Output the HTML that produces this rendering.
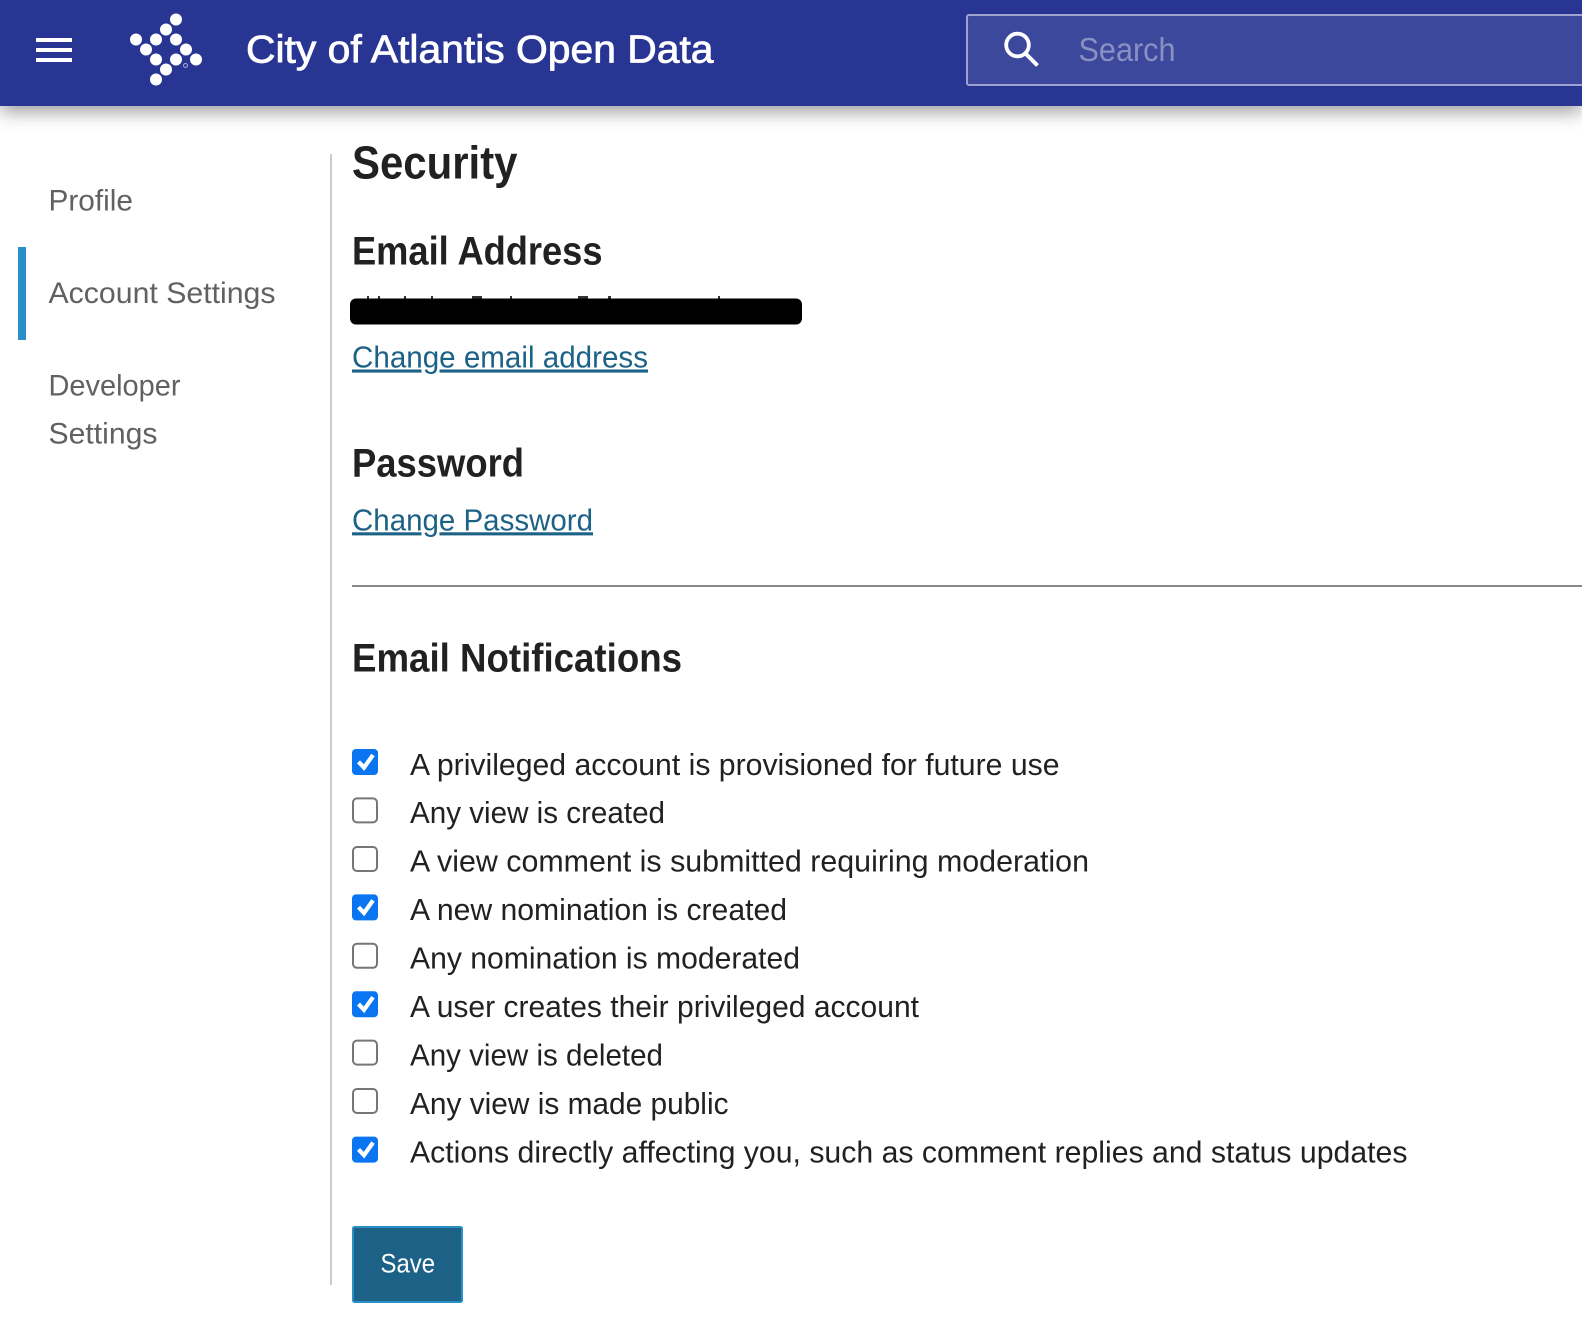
<!DOCTYPE html>
<html><head><meta charset="utf-8"><title>Security</title>
<style>
html,body{margin:0;padding:0;background:#fff;width:1582px;height:1326px;overflow:hidden}
#hdr{position:absolute;left:0;top:0;width:1582px;height:106px;background:#283593;box-shadow:0 5px 18px rgba(0,0,0,.42)}
svg{position:absolute;left:0;top:0}
text{font-family:"Liberation Sans",sans-serif}
.h{font-weight:700;fill:#212121}
.nav{font-size:30px;fill:#616161}
.row{font-size:30.5px;fill:#212121}
.lnk{font-size:31px;fill:#1c6286;text-decoration:underline;text-decoration-thickness:3px;text-underline-offset:3px}
</style></head><body>
<div id="hdr"></div>
<svg width="1582" height="1326" viewBox="0 0 1582 1326" xmlns="http://www.w3.org/2000/svg">
<!-- hamburger -->
<rect x="36" y="38" width="36" height="4" fill="#fff"/><rect x="36" y="48" width="36" height="4" fill="#fff"/><rect x="36" y="58" width="36" height="4" fill="#fff"/>
<!-- logo -->
<g fill="#fff">
<circle cx="176" cy="19.5" r="6"/><circle cx="166" cy="29.5" r="6"/><circle cx="136" cy="39.5" r="6"/><circle cx="156" cy="39.5" r="6"/><circle cx="176" cy="39.5" r="6"/><circle cx="146" cy="49.5" r="6"/><circle cx="186" cy="49.5" r="6"/><circle cx="156" cy="59.5" r="6"/><circle cx="176" cy="59.5" r="6"/><circle cx="196" cy="59.5" r="6"/><circle cx="166" cy="69.5" r="6"/><circle cx="156" cy="79.5" r="6"/>
</g>
<circle cx="185.5" cy="65.5" r="2" fill="none" stroke="#a9aed6" stroke-width="1"/>
<text x="246" y="62.5" font-size="39" fill="#fff" stroke="#fff" stroke-width=".8" textLength="467.5" lengthAdjust="spacingAndGlyphs">City of Atlantis Open Data</text>
<!-- search -->
<rect x="967" y="15" width="640" height="70" rx="2" fill="#3b489c" stroke="#9da2d0" stroke-width="2"/>
<circle cx="1017.5" cy="45" r="11.3" fill="none" stroke="#fff" stroke-width="3.8"/>
<path d="M1026 54 L1037.5 65.5" stroke="#fff" stroke-width="4" fill="none"/>
<text x="1078.5" y="61" font-size="33.5" fill="#8a91c2" textLength="97" lengthAdjust="spacingAndGlyphs">Search</text>
<!-- sidebar -->
<rect x="18" y="247" width="8" height="93" fill="#2a8ec7"/>
<rect x="330" y="154" width="2" height="1131" fill="#ccc"/>
<text class="nav" x="48.5" y="210.5" textLength="84.5" lengthAdjust="spacingAndGlyphs">Profile</text>
<text class="nav" x="48.5" y="303" textLength="227" lengthAdjust="spacingAndGlyphs">Account Settings</text>
<text class="nav" x="48.5" y="395.5" textLength="132" lengthAdjust="spacingAndGlyphs">Developer</text>
<text class="nav" x="48.5" y="443.5" textLength="109" lengthAdjust="spacingAndGlyphs">Settings</text>
<!-- main -->
<text class="h" x="352" y="178.7" font-size="46.5" textLength="165.5" lengthAdjust="spacingAndGlyphs">Security</text>
<text class="h" x="352" y="264.5" font-size="39.5" textLength="250.5" lengthAdjust="spacingAndGlyphs">Email Address</text>
<g fill="#333"><rect x="367" y="296" width="2" height="3"/><rect x="378" y="296" width="2" height="3"/><rect x="404" y="296" width="2" height="3"/><rect x="431" y="296" width="2" height="3"/><rect x="472" y="296" width="10" height="3"/><rect x="510" y="296" width="2" height="3"/><rect x="578" y="296" width="10" height="3"/><rect x="608" y="296" width="3" height="3"/><rect x="718" y="296" width="2" height="3"/></g>
<rect x="350" y="298.5" width="452" height="26" rx="6" fill="#000"/>
<text class="lnk" x="352" y="367.5" textLength="296" lengthAdjust="spacingAndGlyphs">Change email address</text>
<text class="h" x="352" y="476.5" font-size="39.5" textLength="172" lengthAdjust="spacingAndGlyphs">Password</text>
<text class="lnk" x="352" y="530.3" textLength="241" lengthAdjust="spacingAndGlyphs">Change Password</text>
<rect x="352" y="585" width="1230" height="2" fill="#888"/>
<text class="h" x="352" y="671.5" font-size="39.5" textLength="330" lengthAdjust="spacingAndGlyphs">Email Notifications</text>
<!-- rows -->
<defs>
<g id="on"><rect x="352" y="0" width="26" height="26" rx="4" fill="#0a75f0"/><path d="M358.5 12.8 L364 18.6 L373 6" fill="none" stroke="#fff" stroke-width="4.2"/></g>
<rect id="off" x="353" y="1" width="24" height="24" rx="4" fill="#fff" stroke="#767676" stroke-width="2"/>
</defs>
<use href="#on" y="749"/>
<use href="#off" y="797.4"/>
<use href="#off" y="846"/>
<use href="#on" y="894.4"/>
<use href="#off" y="942.8"/>
<use href="#on" y="991.2"/>
<use href="#off" y="1039.6"/>
<use href="#off" y="1088"/>
<use href="#on" y="1136.6"/>
<text class="row" x="410" y="775" textLength="649.5" lengthAdjust="spacingAndGlyphs">A privileged account is provisioned for future use</text>
<text class="row" x="410" y="823" textLength="255" lengthAdjust="spacingAndGlyphs">Any view is created</text>
<text class="row" x="410" y="871.7" textLength="679" lengthAdjust="spacingAndGlyphs">A view comment is submitted requiring moderation</text>
<text class="row" x="410" y="920" textLength="377" lengthAdjust="spacingAndGlyphs">A new nomination is created</text>
<text class="row" x="410" y="968.7" textLength="390" lengthAdjust="spacingAndGlyphs">Any nomination is moderated</text>
<text class="row" x="410" y="1017" textLength="509" lengthAdjust="spacingAndGlyphs">A user creates their privileged account</text>
<text class="row" x="410" y="1065.5" textLength="253" lengthAdjust="spacingAndGlyphs">Any view is deleted</text>
<text class="row" x="410" y="1113.8" textLength="318.5" lengthAdjust="spacingAndGlyphs">Any view is made public</text>
<text class="row" x="410" y="1162.7" textLength="997.5" lengthAdjust="spacingAndGlyphs">Actions directly affecting you, such as comment replies and status updates</text>
<!-- save -->
<rect x="353" y="1227" width="109" height="75" rx="1.5" fill="#1c6286" stroke="#2a8ec7" stroke-width="2"/>
<text x="380.5" y="1272.5" font-size="26.5" fill="#fff" textLength="54.5" lengthAdjust="spacingAndGlyphs">Save</text>
</svg>
</body></html>
